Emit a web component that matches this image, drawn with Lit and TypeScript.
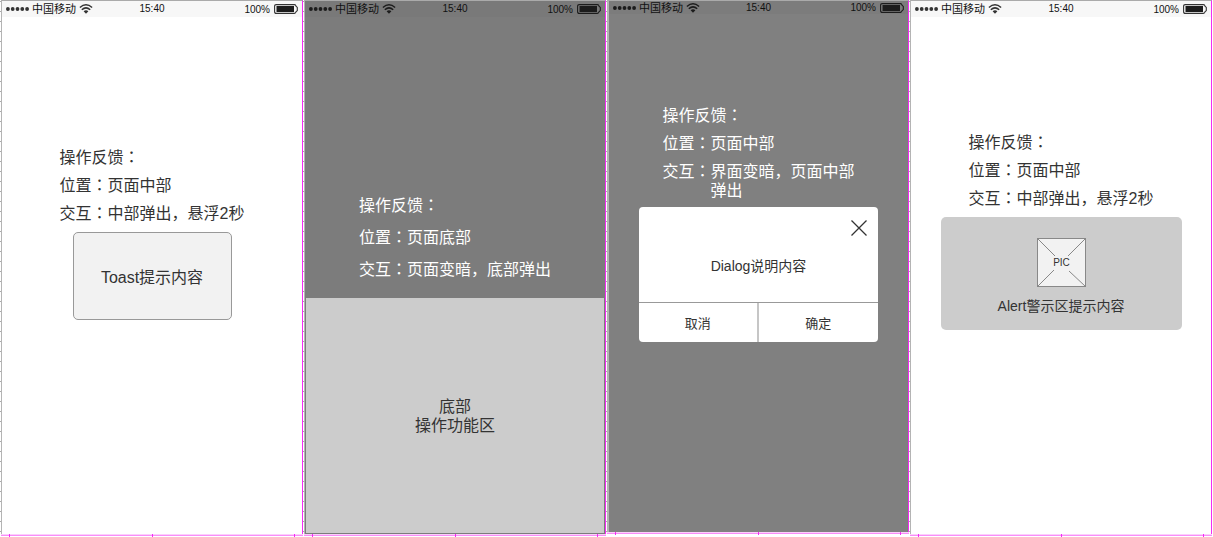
import { LitElement, html, css, svg } from "lit";
import { customElement, property } from "lit/decorators.js";

const base = css`
  * {
    box-sizing: border-box;
  }
  p,
  ul {
    margin: 0;
    padding: 0;
    list-style: none;
  }
  button {
    margin: 0;
    padding: 0;
    border: 0;
    background: none;
    font: inherit;
    color: inherit;
    cursor: pointer;
  }
`;

@customElement("status-bar")
export class StatusBar extends LitElement {
  static styles = [
    base,
    css`
      :host {
        display: grid;
        grid-template-columns: 1fr auto 1fr;
        align-items: center;
        height: 16px;
        padding: 0 4px;
        font-size: 10px;
        line-height: 12px;
        color: #111;
      }
      .side {
        display: flex;
        align-items: center;
        gap: 3px;
      }
      .carrier {
        font-size: 11px;
      }
      .right {
        justify-content: flex-end;
        gap: 4px;
      }
      .percent {
        padding-top: 1px;
      }
      svg {
        display: block;
        color: var(--ink, #333);
      }
    `,
  ];

  render() {
    return html`
      <div class="side">
        <svg width="23" height="4" viewBox="0 0 23 4" fill="currentColor" aria-hidden="true">
          ${[1.9, 6.7, 11.5, 16.3, 21.1].map((x) => svg`<circle cx=${x} cy="2" r="1.9" />`)}
        </svg>
        <span class="carrier">中国移动</span>
        <svg width="14" height="10" viewBox="0 0 14 10" fill="none" stroke="currentColor" stroke-width="1.5" aria-hidden="true">
          <path d="M.9 3.5Q7-1.9 13.1 3.5M2.8 5.7Q7 2 11.2 5.7" />
          <path d="M4.6 7.3Q7 5.1 9.4 7.3L7 9.8Z" fill="currentColor" stroke="none" />
        </svg>
      </div>
      <span>15:40</span>
      <div class="side right">
        <span class="percent">100%</span>
        <svg width="24" height="10" viewBox="0 0 24 10" aria-hidden="true">
          <path
            d="M2.2 .6H20.4Q21.8 .6 22 2.2L23.3 3.4V6.6L22 7.8Q21.8 9.4 20.4 9.4H2.2Q.6 9.4 .6 7.8V2.2Q.6 .6 2.2 .6Z"
            fill="none"
            stroke="currentColor"
            stroke-width="1.1"
          />
          <rect x="2.5" y="2" width="17.5" height="6" fill="#1c1c1c" />
        </svg>
      </div>
    `;
  }
}

@customElement("phone-frame")
export class PhoneFrame extends LitElement {
  static styles = [
    base,
    css`
      :host {
        display: flex;
        flex-direction: column;
        min-width: 0;
      }
      .row {
        flex: 1;
        display: flex;
      }
      .ruler {
        width: 1px;
        background: repeating-linear-gradient(#fff 0 1px, #aaa 1px 2px, #fff 2px 10px);
      }
      .screen {
        flex: 1;
        min-width: 0;
        display: flex;
        flex-direction: column;
        background: var(--screen, #fff);
        border-top: 1px solid #aaa;
        border-left: var(--edge, 1px) solid #b4b4b4;
        border-right: 1px solid #f42bf4;
      }
      .bar {
        height: var(--bar-height, 16px);
        background: var(--bar, #f7f7f7);
      }
      .body {
        flex: 1;
        display: flex;
        flex-direction: column;
        align-items: center;
      }
      .foot {
        display: flex;
        justify-content: space-between;
        margin-left: 1px;
        height: 3px;
        padding: 0 8px;
        background: linear-gradient(#fbd0fb 1px, #f98df9 1px 2px, #fff 2px);
      }
      .tick {
        width: 1px;
        background: #f42bf4;
      }
    `,
  ];

  render() {
    return html`
      <div class="row">
        <div class="ruler"></div>
        <div class="screen">
          <status-bar class="bar"></status-bar>
          <div class="body"><slot></slot></div>
        </div>
      </div>
      <div class="foot">
        <span class="tick"></span><span class="tick"></span><span class="tick"></span>
      </div>
    `;
  }
}

interface Note {
  label: string;
  lines?: string[];
}

@customElement("feedback-notes")
export class FeedbackNotes extends LitElement {
  @property({ attribute: false }) notes: Note[] = [];

  static styles = [
    base,
    css`
      :host {
        display: block;
        font-size: 16px;
        line-height: 19px;
      }
      .list {
        display: flex;
        flex-direction: column;
        gap: var(--note-gap, 9px);
      }
      .note {
        display: flex;
        white-space: nowrap;
      }
      .colon {
        font-family: "Liberation Sans", "Noto Sans CJK JP", sans-serif;
      }
    `,
  ];

  render() {
    return html`
      <ul class="list">
        ${this.notes.map(
          (n) => html`<li class="note">
            <span>${n.label}<span class="colon" lang="ja">：</span></span>
            <div>${(n.lines ?? []).map((l) => html`<p>${l}</p>`)}</div>
          </li>`
        )}
      </ul>
    `;
  }
}

const notes = (position: string, ...action: string[]): Note[] => [
  { label: "操作反馈" },
  { label: "位置", lines: [position] },
  { label: "交互", lines: action },
];

@customElement("app-root")
export class AppRoot extends LitElement {
  static styles = [
    base,
    css`
      :host {
        display: grid;
        grid-template-columns: repeat(4, minmax(0, 1fr));
        min-height: 100vh;
        padding-right: 1px;
        box-sizing: border-box;
        background: #fff;
        color: #333;
        font-family: "Liberation Sans", "Noto Sans CJK SC", sans-serif;
      }
      .dim {
        --screen: #7c7c7c;
        --bar: #797979;
        --ink: #1c1c1c;
        color: #fff;
      }
      .modal {
        --screen: #808080;
        --bar: #7c7c7c;
        --bar-height: 13px;
        --edge: 2px;
        margin-bottom: 2px;
      }
      .toast-notes {
        margin: 131px 0 9px;
      }
      .sheet-notes {
        --note-gap: 13px;
        margin: 179px 0 19px;
      }
      .dialog-notes {
        margin: 92px 0 7px;
      }
      .alert-notes {
        margin: 116px 0 9px;
      }
      .toast {
        display: grid;
        place-items: center;
        width: 159px;
        height: 88px;
        padding-top: 2px;
        border: 1px solid #999;
        border-radius: 5px;
        background: #f2f2f2;
        font-size: 16px;
        line-height: 19px;
      }
      .sheet {
        flex: 1;
        align-self: stretch;
        display: flex;
        flex-direction: column;
        justify-content: center;
        border: 1px solid #7c7c7c;
        border-top: 0;
        background: #ccc;
        color: #333;
        font-size: 16px;
        line-height: 19px;
        text-align: center;
      }
      .dialog {
        width: 239px;
        border-radius: 4px;
        background: #fff;
        color: #333;
        overflow: hidden;
      }
      .dialog-head {
        display: flex;
        justify-content: flex-end;
        padding: 12px 10px 0;
      }
      .close {
        width: 18px;
        height: 18px;
      }
      .close svg {
        display: block;
      }
      .dialog-text {
        padding: 20px 0 26px;
        font-size: 14px;
        line-height: 19px;
        text-align: center;
      }
      .actions {
        display: grid;
        grid-template-columns: 1fr 1fr;
        border-top: 1px solid #999;
      }
      .action {
        height: 39px;
        padding-top: 2px;
        font-size: 13px;
        line-height: 19px;
      }
      .action:first-child {
        border-right: 2px solid #c6c6c6;
      }
      .alert {
        display: flex;
        flex-direction: column;
        align-items: center;
        gap: 10px;
        width: 241px;
        padding: 21px 0 14px;
        border-radius: 5px;
        background: #ccc;
        font-size: 14px;
        line-height: 19px;
      }
      .pic {
        display: block;
        font-size: 10px;
      }
    `,
  ];

  render() {
    return html`
      <phone-frame>
        <feedback-notes class="toast-notes" .notes=${notes("页面中部", "中部弹出，悬浮2秒")}></feedback-notes>
        <div class="toast" role="status">Toast提示内容</div>
      </phone-frame>

      <phone-frame class="dim">
        <feedback-notes class="sheet-notes" .notes=${notes("页面底部", "页面变暗，底部弹出")}></feedback-notes>
        <div class="sheet">
          <p>底部</p>
          <p>操作功能区</p>
        </div>
      </phone-frame>

      <phone-frame class="dim modal">
        <feedback-notes class="dialog-notes" .notes=${notes("页面中部", "界面变暗，页面中部", "弹出")}></feedback-notes>
        <div class="dialog" role="dialog">
          <div class="dialog-head">
            <button class="close" aria-label="关闭">
              <svg width="18" height="18" viewBox="0 0 18 18" stroke="#333" stroke-width="1.3">
                <path d="M1.5 1.5L16.5 16.5M16.5 1.5L1.5 16.5" />
              </svg>
            </button>
          </div>
          <p class="dialog-text">Dialog说明内容</p>
          <div class="actions">
            <button class="action">取消</button>
            <button class="action">确定</button>
          </div>
        </div>
      </phone-frame>

      <phone-frame>
        <feedback-notes class="alert-notes" .notes=${notes("页面中部", "中部弹出，悬浮2秒")}></feedback-notes>
        <div class="alert" role="alert">
          <svg class="pic" width="49" height="49" viewBox="0 0 49 49">
            <rect x=".5" y=".5" width="48" height="48" fill="#f2f2f2" stroke="#888" />
            <path d="M.5 .5L18 18M48.5 .5L31 18M.5 48.5L17 32M48.5 48.5L32 33" stroke="#888" />
            <text x="24.5" y="28" text-anchor="middle" fill="#333">PIC</text>
          </svg>
          <p>Alert警示区提示内容</p>
        </div>
      </phone-frame>
    `;
  }
}
